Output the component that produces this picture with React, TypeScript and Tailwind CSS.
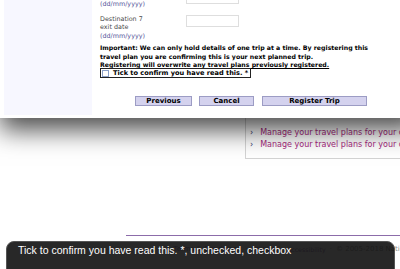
import React from 'react';

// Footer links of the page that sits behind the dialog
const footerLinks = ['Terms & Conditions', 'Privacy'];

function DateRow({ title, kind, inputTop }: { title: string; kind: string; inputTop: string }) {
    return (
        <div className="flex items-start">
            <div className="w-[86px] leading-[8.5px]">
                <div className="text-[#4a4a4a]">{title}</div>
                <div className="text-[#4a4a4a]">{kind}</div>
                <div className="text-[#55559a]">(dd/mm/yyyy)</div>
            </div>
            <input type="text" className={`${inputTop} h-[12px] w-[53px] border border-[#dedede] bg-white`} />
        </div>
    );
}

export default function App() {
    return (
        <div className="relative h-[269px] w-[400px] overflow-hidden bg-white" style={{ fontFamily: '"DejaVu Sans", Verdana, sans-serif' }}>
            {/* Page behind the dialog */}
            <div className="flex flex-col pt-[118px]">
                <div className="ml-[245px] flex h-[41px] flex-col justify-center gap-[3px] border-b border-l border-[#d4d4d4] pl-[4px]">
                    {[0, 1].map((i) => (
                        <div key={i} className="flex items-center gap-[7px] whitespace-nowrap text-[8px] leading-[9px] text-[#a8287e]">
                            <span className="text-[#333366]">›</span>
                            <span>Manage your travel plans for your overseas trips</span>
                        </div>
                    ))}
                </div>
                <div className="mt-[76px] ml-[126px] h-[1px] bg-[#8c6caa]" />
                <div className="mt-[9px] flex items-center whitespace-nowrap text-[7px] leading-[9px] text-[#8a8a8a]">
                    <div className="flex w-[283px] shrink-0 justify-end gap-[4px]">
                        {footerLinks.map((l) => (
                            <React.Fragment key={l}>
                                <span className="text-[#8e6aa8]">{l}</span>
                                <span>·</span>
                            </React.Fragment>
                        ))}
                    </div>
                    <div className="ml-[4px] flex gap-[4px]">
                        <span className="text-[6.3px] text-[#8e6aa8]">Accessibility</span>
                        <span>·</span>
                        <span>© 2005-2018 Nationwide</span>
                    </div>
                </div>
            </div>

            {/* Dialog */}
            <div className="absolute left-0 top-0 flex h-[118px] w-[420px] bg-white shadow-[0_12px_24px_rgba(0,0,0,0.7)]">
                <div className="ml-[4px] h-[115px] w-[88px] bg-[#f7f7ff]" />
                <div className="ml-[8px] mt-[-17px] flex flex-col text-[6.4px]">
                    <div className="flex flex-col gap-[6px]">
                        <DateRow title="Destination 7" kind="entry date" inputTop="mt-[9px]" />
                        <DateRow title="Destination 7" kind="exit date" inputTop="mt-0" />
                    </div>
                    <div className="mt-[4px] w-[270px] text-[6.23px] font-bold leading-[8.5px] text-black">
                        Important: We can only hold details of one trip at a time. By registering this travel plan you are confirming this is your next planned trip.
                        <span className="block underline">Registering will overwrite any travel plans previously registered.</span>
                    </div>
                    <label className="mt-[-1.5px] flex h-[10px] w-[151px] items-center gap-[4px] border border-[#222] pl-[1px] text-[6.6px] font-bold leading-[8px] text-black">
                        <span className="h-[7px] w-[7px] shrink-0 border border-[#8aa0c8] bg-white" />
                        <span className="whitespace-nowrap">Tick to confirm you have read this. *</span>
                    </label>
                    <div className="mt-[18px] ml-[35px] flex gap-[7px] text-[7px] font-bold text-black">
                        <button className="h-[10px] w-[57px] border border-[#9c9cc4] bg-[#d4d2ee] leading-[8px]">Previous</button>
                        <button className="h-[10px] w-[55px] border border-[#9c9cc4] bg-[#d4d2ee] leading-[8px]">Cancel</button>
                        <button className="ml-[1px] h-[10px] w-[105px] border border-[#9c9cc4] bg-[#d4d2ee] leading-[8px]">Register Trip</button>
                    </div>
                </div>
            </div>

            {/* VoiceOver caption */}
            <div className="absolute left-[6px] top-[241px] h-[40px] w-[389px] rounded-[8px] border border-[#555] bg-[#111]/90 pl-[11px] pt-[2px] text-[10.5px] leading-[12px] text-white" style={{ fontFamily: '"Liberation Sans", Arial, sans-serif' }}>
                <span className="whitespace-nowrap">Tick to confirm you have read this. *, unchecked, checkbox</span>
            </div>
        </div>
    );
}
